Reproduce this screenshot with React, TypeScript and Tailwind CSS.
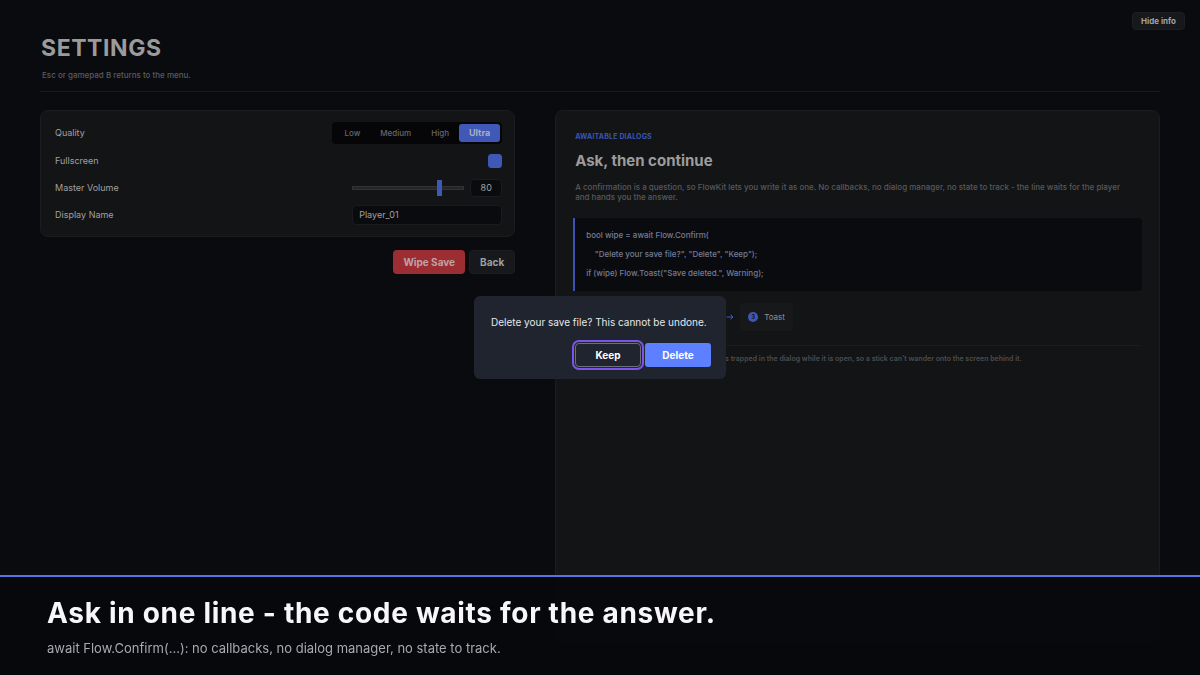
import { useState } from "react"
import { clsx } from "clsx"

const QUALITIES = ["Low", "Medium", "High", "Ultra"]

const Arrow = () => (
  <svg viewBox="0 0 8 8" className="size-2 shrink-0 text-[#3f5ac0]" fill="none" stroke="currentColor" strokeWidth="1" aria-hidden="true">
    <path d="M0.5 4H7M4.6 1.6L7 4L4.6 6.4" />
  </svg>
)

const Header = () => (
  <header className="border-b border-[#17181b] pt-9 pb-[9px]">
    <h1 className="px-px text-[23px] leading-6 font-bold tracking-wide text-[#9b9b9c]">SETTINGS</h1>
    <p className="mt-2 px-0.5 text-[8px] leading-[14px] font-medium text-[#5b5c5f]">Esc or gamepad B returns to the menu.</p>
  </header>
)

const SettingsPanel = () => {
  const [quality, setQuality] = useState("Ultra")
  const [volume, setVolume] = useState(80)

  return (
    <section>
      <div className="flex flex-col gap-[7px] rounded-lg border border-[#1b1c1e] bg-[#131416] px-3 py-[11px] text-[9px] leading-5 text-[#a0a0a1]">
        <fieldset className="flex items-center justify-between">
          <legend className="float-left px-0.5">Quality</legend>
          <div className="flex rounded bg-[#060609] p-0.5">
            {QUALITIES.map((item) => (
              <label
                key={item}
                className={clsx(
                  "rounded-[3px] px-2.5 leading-[18px]",
                  item === quality ? "bg-[#4059b8] font-bold text-[#a9adbd]" : "text-[8px] font-medium text-[#66676a]"
                )}
              >
                <input
                  type="radio"
                  name="quality"
                  className="sr-only"
                  checked={item === quality}
                  onChange={() => setQuality(item)}
                />
                {item}
              </label>
            ))}
          </div>
        </fieldset>
        <div className="flex items-center justify-between">
          <label htmlFor="fullscreen" className="px-0.5">Fullscreen</label>
          <input id="fullscreen" type="checkbox" defaultChecked className="size-3.5 appearance-none rounded-[3px] border border-[#3f58b6] checked:bg-[#3f58b6]" />
        </div>
        <div className="flex items-center justify-between">
          <label htmlFor="volume" className="px-0.5">Master Volume</label>
          <div className="flex items-center gap-1.5">
            <input
              id="volume"
              type="range"
              value={volume}
              onChange={(e) => setVolume(Number(e.target.value))}
              className="h-1 w-28 appearance-none border border-[#323335] bg-[#252628] [&::-webkit-slider-thumb]:h-4 [&::-webkit-slider-thumb]:w-[5px] [&::-webkit-slider-thumb]:appearance-none [&::-webkit-slider-thumb]:bg-[#3f58b6]"
            />
            <input
              aria-label="Volume value"
              value={volume}
              onChange={(e) => setVolume(Number(e.target.value) || 0)}
              className="h-[18px] w-8 rounded border border-[#1a1b1e] bg-[#0a0b0f] text-center"
            />
          </div>
        </div>
        <div className="flex items-center justify-between">
          <label htmlFor="display-name" className="px-0.5">Display Name</label>
          <input id="display-name" defaultValue="Player_01" className="h-5 w-[150px] rounded border border-[#1a1b1e] bg-[#0a0b0f] px-1.5" />
        </div>
      </div>
      <div className="mt-[13px] flex justify-end gap-1 text-[10px] leading-6 font-bold">
        <button type="button" className="rounded bg-[#9c2e33] px-2.5 text-[#bfa3a6]">Wipe Save</button>
        <button type="button" className="rounded border border-[#1c1d20] bg-[#17181b] px-2.5 leading-[22px] text-[#9fa0a1]">Back</button>
      </div>
    </section>
  )
}

const InfoPanel = () => (
  <section className="rounded-lg border border-[#1b1c1e] bg-[#131416] px-[19px] pt-5">
    <p className="text-[7px] leading-3 font-bold tracking-wide text-[#3b54b4]">AWAITABLE DIALOGS</p>
    <h2 className="mt-2 text-[15px] leading-5 font-bold text-[#9c9c9d]">Ask, then continue</h2>
    <p className="mt-[11px] pr-3 text-[8px] leading-[10px] font-medium text-[#58595c]">
      A confirmation is a question, so FlowKit lets you write it as one. No callbacks, no dialog manager, no state to track - the line waits for the player and hands you the answer.
    </p>
    <pre className="-mx-0.5 mt-4 rounded-r border-l-2 border-[#3b54b4] bg-[#0a0b0f] px-[11px] py-2 font-[Inter] text-[8px] leading-[19px] font-medium text-[#747c96]">
      {`bool wipe = await Flow.Confirm(\n    "Delete your save file?", "Delete", "Keep");\nif (wipe) Flow.Toast("Save deleted.", Warning);`}
    </pre>
    <div className="mt-3 flex items-center gap-1.5 pl-[151px]">
      <Arrow />
      <span className="flex items-center gap-1.5 rounded-[3px] bg-[#17181a] px-2 text-[8px] leading-7 text-[#929394]">
        <span className="size-2.5 rounded-full bg-[#3f58b6] text-center text-[6px] leading-[10px] font-bold text-[#131416]">3</span>
        Toast
      </span>
    </div>
    <p className="mt-[14px] border-t border-[#1b1c1e] pt-[7px] pl-[148px] text-[7px] leading-3 font-semibold text-[#4c4d50]">
      is trapped in the dialog while it is open, so a stick can't wander onto the screen behind it.
    </p>
  </section>
)

const ConfirmDialog = () => (
  <div className="fixed inset-0 grid place-items-center">
    <div role="dialog" aria-modal="true" aria-labelledby="confirm-text" className="w-[252px] rounded-md bg-[#20242f] pt-[18px] pr-[15px] pb-3 pl-[17px]">
      <p id="confirm-text" className="text-[10px] leading-4 text-[#e6e7ea]">Delete your save file? This cannot be undone.</p>
      <div className="mt-[13px] flex justify-end gap-1 text-[10px] leading-6 font-bold text-white">
        <button type="button" className="w-[66px] rounded border border-[#6c6f77] leading-[22px] outline-2 outline-offset-1 outline-[#7c55e8]">Keep</button>
        <button type="button" className="w-[66px] rounded-[3px] bg-[#5c80ff]">Delete</button>
      </div>
    </div>
  </div>
)

const Caption = () => (
  <footer className="fixed inset-x-0 bottom-0 border-t-2 border-[#5674e8] bg-[#07080c]/95 px-[47px] pt-4 pb-[15px]">
    <p className="text-[28px] leading-10 font-bold tracking-wide text-[#f7f7fa]">Ask in one line - the code waits for the answer.</p>
    <p className="mt-[3px] text-[13px] leading-6 text-[#a8a9b0]">await Flow.Confirm(...): no callbacks, no dialog manager, no state to track.</p>
  </footer>
)

const App = () => {
  return (
    <div className="relative flex min-h-screen flex-col bg-[#0a0b0f] px-10 pb-8 font-[Inter,sans-serif]">
      <button type="button" className="absolute top-3 right-[15px] rounded border border-[#1d1e21] bg-[#17181b] px-2 text-[8px] leading-4 font-bold text-[#a3a3a4]">
        Hide info
      </button>
      <Header />
      <main className="mt-[18px] grid flex-1 grid-cols-[44fr_56fr] gap-10">
        <SettingsPanel />
        <InfoPanel />
      </main>
      <Caption />
      <ConfirmDialog />
    </div>
  )
}

export default App
